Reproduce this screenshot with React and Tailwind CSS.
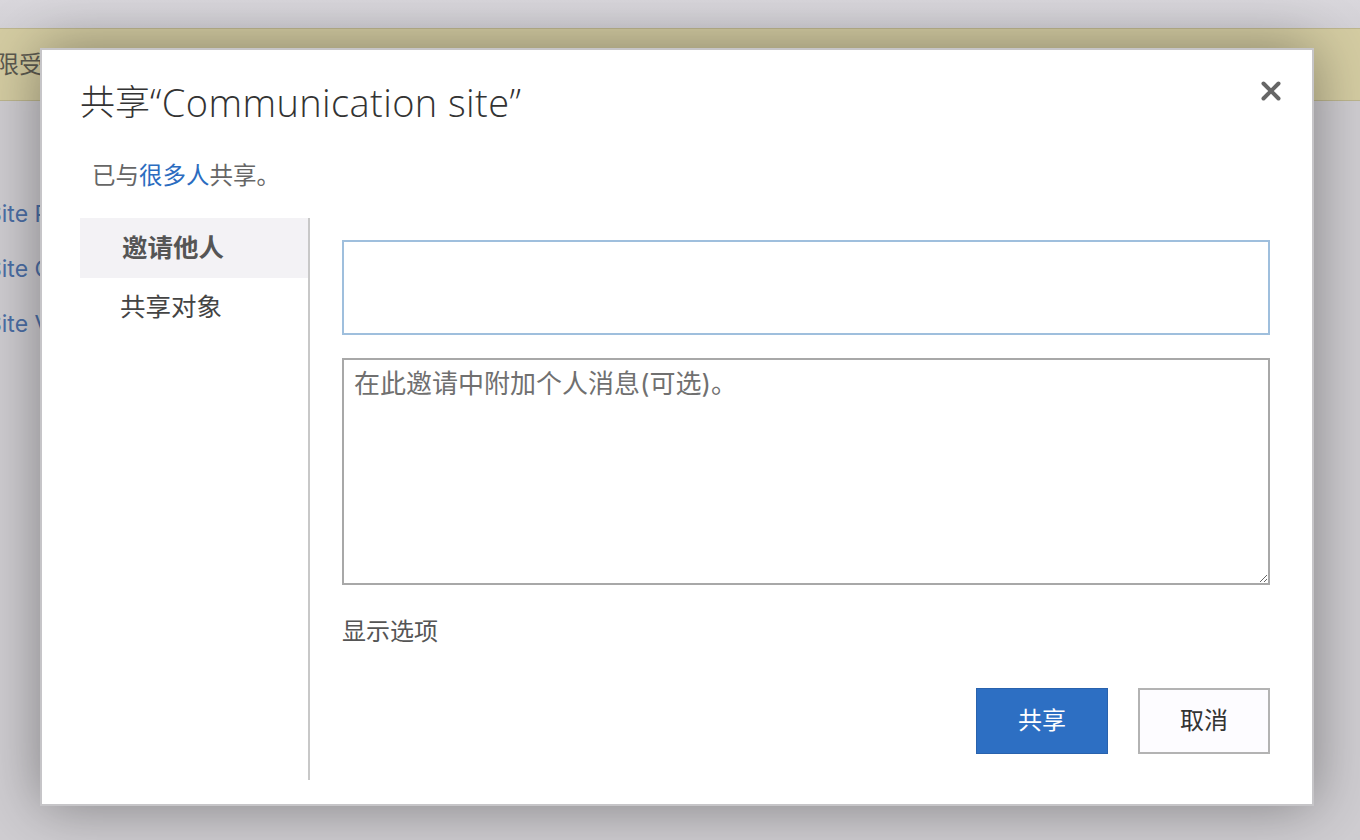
import { X } from 'lucide-react';

const cjk = "font-['Inter','Noto_Sans_CJK_SC',sans-serif]";

function Backdrop() {
  return (
    <div className="min-h-[840px] w-full bg-[#cfcdd1] overflow-hidden">
      {/* suite bar */}
      <div className="h-[28px] bg-gradient-to-b from-[#d9d7dc] to-[#d3d1d6]" />
      {/* status banner */}
      <div className="h-[73px] bg-[#d4cca2] border-t border-b border-[#bdb68e] flex items-center">
        <span className="-ml-[29px] text-[24px] text-[#5c5a50] whitespace-nowrap">权限受到限制</span>
      </div>
      <div className="flex flex-col gap-[27px] pt-[99px] text-[23px] text-[#4c6fa6] leading-[28px]">
        <span className="-ml-[13px] whitespace-nowrap">Site Pages</span>
        <span className="-ml-[13px] whitespace-nowrap">Site Contents</span>
        <span className="-ml-[13px] whitespace-nowrap">Site Visitors</span>
      </div>
    </div>
  );
}

function ShareDialog() {
  return (
    <div className={`absolute left-[40px] top-[48px] w-[1274px] h-[758px] bg-white border-2 border-[#c6c5c8] shadow-[0_0_55px_rgba(0,0,0,0.38)] ${cjk}`}>
      <button className="absolute right-[26px] top-[26px] text-[#666666]">
        <X size={30} strokeWidth={3.2} />
      </button>

      <h1 className="pl-[38px] mt-[30px] h-[44px] flex items-center text-[35px] leading-[44px] font-light text-[#333333] font-['Open_Sans','Noto_Sans_CJK_SC',sans-serif] whitespace-nowrap">
        共享<span className="text-[38px] tracking-[0.4px]">“Communication site”</span>
      </h1>
      <p className="pl-[50px] mt-[36px] text-[23.5px] leading-[32px] text-[#666666]">
        已与<a className="text-[#2b6cc0]">很多人</a>共享。
      </p>

      <div className="flex mt-[26px] pl-[38px] h-[562px]">
        {/* left nav */}
        <div className="w-[230px] border-r-2 border-[#c8c8c8] flex flex-col">
          <div className="h-[60px] bg-[#f3f2f5] flex items-center pl-[42px] text-[25.5px] font-bold text-[#555555]">
            邀请他人
          </div>
          <div className="h-[58px] flex items-center pl-[40px] text-[25.5px] text-[#444444]">
            共享对象
          </div>
        </div>

        {/* invite form */}
        <div className="flex-1 pl-[32px] pr-[42px] pt-[22px] flex flex-col">
          <input className="h-[95px] w-full border-2 border-[#9fbfdd] outline-none px-3 text-[24px]" />
          <textarea
            className="mt-[23px] h-[227px] w-full border-2 border-[#a8a8a8] outline-none px-[10px] py-[6px] text-[26px] leading-[36px] text-[#333] placeholder:text-[#707070]"
            placeholder="在此邀请中附加个人消息(可选)。"
          />
          <div className="mt-[31px] text-[24px] leading-[32px] text-[#555555]">显示选项</div>
          <div className="mt-[40px] flex justify-end gap-[30px]">
            <button className="w-[132px] h-[66px] bg-[#2d6fc3] border border-[#2962ad] text-white text-[24px]">
              共享
            </button>
            <button className="w-[132px] h-[66px] bg-[#fdfcff] border-2 border-[#b3b3b3] text-[#333333] text-[24px]">
              取消
            </button>
          </div>
        </div>
      </div>
    </div>
  );
}

export default function App() {
  return (
    <div className={`relative w-[1360px] h-[840px] overflow-hidden ${cjk}`}>
      <Backdrop />
      <ShareDialog />
    </div>
  );
}
